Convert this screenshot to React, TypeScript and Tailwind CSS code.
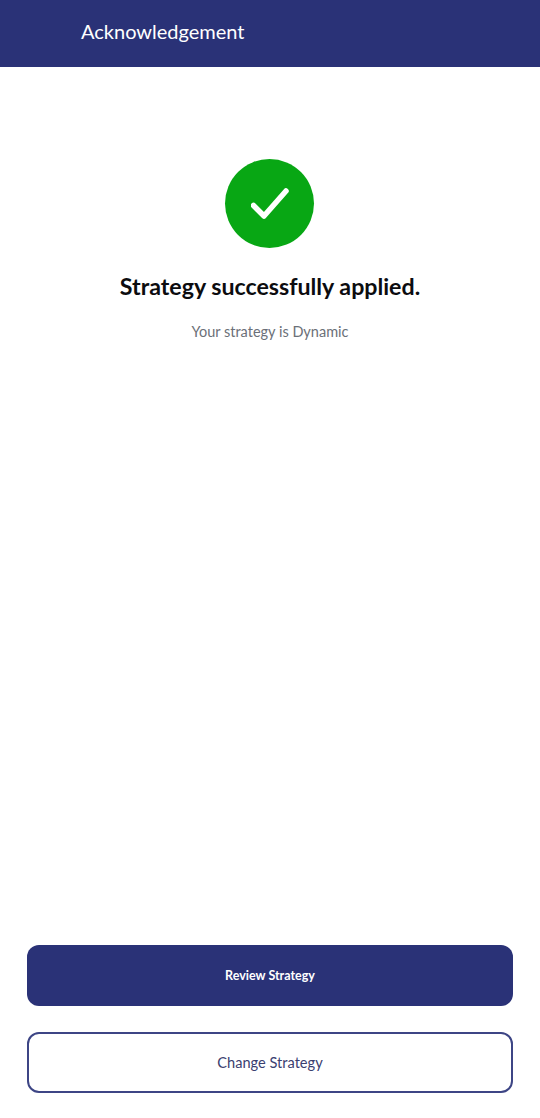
export default function App() {
  return (
    <div className="flex h-[1118px] flex-col bg-white font-['Lato',sans-serif]">
      {/* Header */}
      <header className="flex h-[67px] items-center bg-[#2a3277] pb-[5px] pl-[81px]">
        <h1 className="text-[20px] text-white">Acknowledgement</h1>
      </header>

      {/* Status */}
      <div className="flex flex-1 flex-col items-center pt-[92px]">
        <div className="mr-[1px] flex h-[89px] w-[89px] items-center justify-center rounded-full bg-[#08a714]">
          <svg width="38" height="32" viewBox="0 0 38 32" fill="none">
            <path d="M2.5 17.5 L13 28 L35 3" stroke="white" strokeWidth="5.5" strokeLinecap="round" strokeLinejoin="round" />
          </svg>
        </div>
        <h2 className="mt-[20px] text-[23.2px] leading-[36px] font-bold text-[#0c0c0f]">Strategy successfully applied.</h2>
        <p className="mt-[18px] text-[14.5px] leading-[20px] text-[#6b7078]">Your strategy is Dynamic</p>
      </div>

      {/* Actions */}
      <div className="flex flex-col gap-[26px] px-[27px] pb-[25px]">
        <button className="h-[61px] rounded-[12px] bg-[#2a3277] pt-[1px] text-[12.5px] font-bold text-white">Review Strategy</button>
        <button className="h-[61px] rounded-[12px] border-2 border-[#3d4585] bg-white text-[14.6px] text-[#3a4070]">Change Strategy</button>
      </div>
    </div>
  )
}
